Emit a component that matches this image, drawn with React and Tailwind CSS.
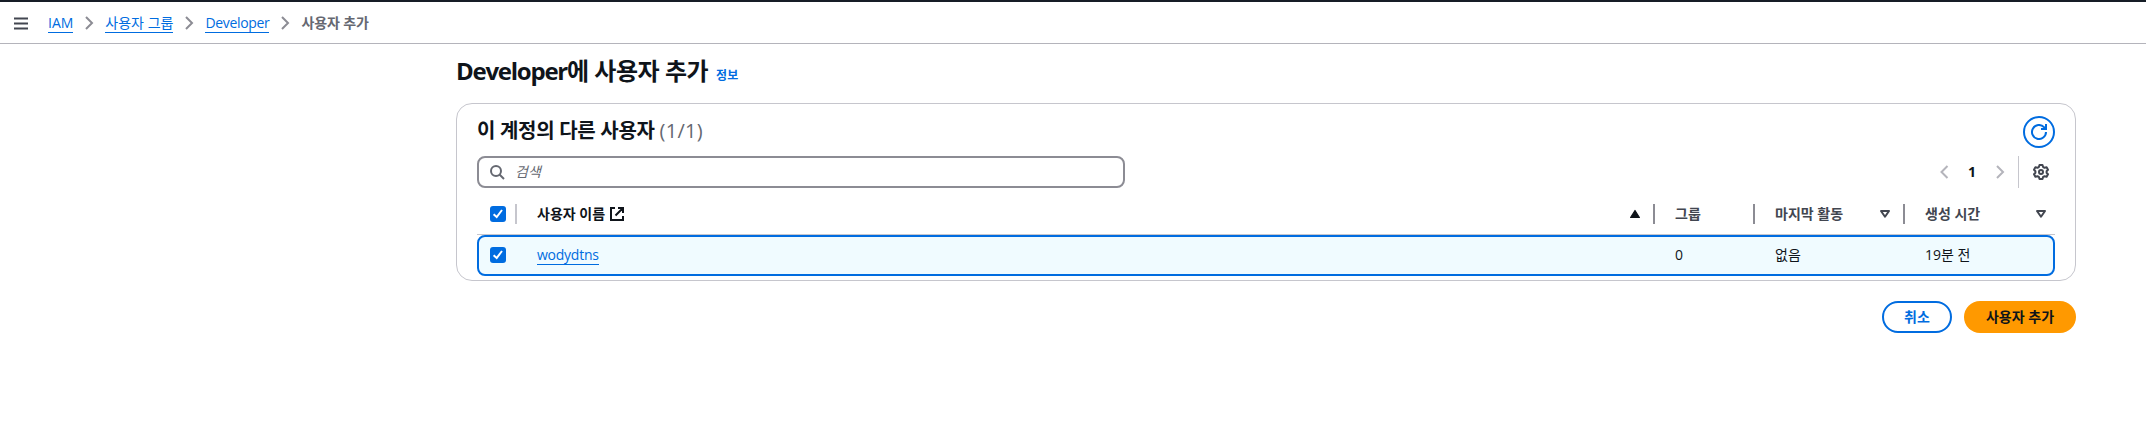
import React from "react";

function Icon({ children, className = "", width = 2 }) {
  return (
    <svg viewBox="0 0 16 16" className={"size-4 shrink-0 " + className} fill="none" stroke="currentColor" strokeWidth={width} aria-hidden="true">
      {children}
    </svg>
  );
}

function Chevron({ left = false, className = "" }) {
  return (
    <Icon className={className}>
      <path d={left ? "M11.500 2l-6 6 6 6" : "M5 2l6 6-6 6"} />
    </Icon>
  );
}

function Checkbox() {
  return (
    <span className="flex size-4 rounded-[3px] bg-[#006ce0] text-white">
      <svg viewBox="0 0 16 16" className="size-4" fill="none" stroke="currentColor" strokeWidth="2">
        <path d="M3.600 8.200 6.700 11 12 4" />
      </svg>
    </span>
  );
}

function SortIcon({ filled = false }) {
  return (
    <Icon className={filled ? "text-[#0f141a]" : "text-[#424650]"}>
      {filled ? (
        <path d="M8 4.500 12.400 11.500H3.600z" fill="currentColor" strokeWidth="1.2" strokeLinejoin="round" />
      ) : (
        <path d="M4 5h8L8 10.800z" strokeLinejoin="round" />
      )}
    </Icon>
  );
}

function Crumb({ children, className = "" }) {
  return (
    <a href="#" className={"flex h-5 items-center border-b border-[#006ce0] pt-px text-[#006ce0] " + className}>
      {children}
    </a>
  );
}

const GRID = "grid grid-cols-[40px_1138px_100px_150px_150px]";

function HeaderCell({ label, sort, divider = true, active = false, external = false }) {
  return (
    <div className={"flex h-5 items-center pl-5 font-bold " + (divider ? "border-r-2 border-[#8c8c94] " : "") + (active ? "text-[#0f141a]" : "text-[#424650]")}>
      <span>{label}</span>
      {external && (
        <Icon className="ml-1 text-[#0f141a]">
          <path d="M9 2h5v5M6.500 9.500 14 2M14 10v4H2V2h4" />
        </Icon>
      )}
      {sort && (
        <span className={"ml-auto " + (divider ? "mr-2.5" : "mr-1.5")}>
          <SortIcon filled={active} />
        </span>
      )}
    </div>
  );
}

export default function App() {
  return (
    <div className="h-[431px] w-[2146px] overflow-hidden bg-white font-['Open_Sans','Noto_Sans_CJK_KR',sans-serif] text-sm leading-5 text-[#0f141a]">
      <div className="h-0.5 bg-[#161d26]" />
      <nav className="flex h-[42px] items-center border-b border-[#b4b4bb] pl-[13px]">
        <Icon className="text-[#424650]">
          <path d="M1 3.500h14M1 8.500h14M1 13.500h14" />
        </Icon>
        <div className="ml-[19px] flex items-center gap-2">
          <Crumb>IAM</Crumb>
          <Chevron className="mt-px text-[#8c8c94]" />
          <Crumb>사용자 그룹</Crumb>
          <Chevron className="mt-px text-[#8c8c94]" />
          <Crumb className="tracking-[-0.33px]">Developer</Crumb>
          <Chevron className="mt-px text-[#8c8c94]" />
          <span className="font-bold tracking-[-0.1px] text-[#656871]">사용자 추가</span>
        </div>
      </nav>

      <main className="ml-[456px] w-[1620px]">
        <div className="flex h-[59px] items-baseline gap-2 pt-3">
          <h1 className="text-2xl leading-[30px] font-bold tracking-[-0.02em]">
            <span className="tracking-[-1.25px]">Developer</span>에 사용자 추가
          </h1>
          <a href="#" className="text-xs font-bold text-[#006ce0]">정보</a>
        </div>

        <section className="h-[178px] rounded-2xl border border-[#c6c6cd] px-5 pt-3">
          <div className="flex h-8 items-center justify-between">
            <h2 className="pb-0.5 text-xl leading-6 font-bold tracking-[-0.015em]">
              이 계정의 다른 사용자 <span className="font-normal tracking-[0.3px] text-[#656871]">(1/1)</span>
            </h2>
            <button className="flex size-8 items-center justify-center rounded-full border-2 border-[#006ce0] text-[#006ce0]">
              <Icon>
                <path d="M15 8A7 7 0 1 1 13 3.100L14.500 5M15 0v5h-5" />
              </Icon>
            </button>
          </div>

          <div className="mt-2 flex h-8 items-center justify-between">
            <div className="flex h-8 w-[648px] items-center gap-2.5 rounded-lg border-2 border-[#8c8c94] pl-2.5 text-[#656871]">
              <Icon>
                <circle cx="7" cy="7" r="5" />
                <path d="m10.500 10.500 4.500 4.500" />
              </Icon>
              <span className="italic">검색</span>
            </div>
            <div className="flex h-8 items-center">
              <Chevron left className="text-[#b4b4bb]" />
              <span className="w-10 text-center font-bold">1</span>
              <Chevron className="text-[#b4b4bb]" />
              <span className="ml-2.5 h-8 w-px bg-[#c6c6cd]" />
              <Icon className="mr-1.5 ml-3.5 text-[#424650]">
                <path d="M6.500 1h3l.6 2 1.500.8 2-.5 1.400 2.500L13.600 7.200v1.600l1.400 1.400-1.400 2.500-2-.5-1.500.8-.6 2h-3l-.6-2-1.500-.8-2 .5L1 10.200l1.400-1.400V7.200L1 5.800l1.400-2.500 2 .5L5.900 3z" strokeLinejoin="round" />
                <circle cx="8" cy="8" r="2" />
              </Icon>
            </div>
          </div>

          <div className={GRID + " mt-[6px] h-[41px] items-center border-b border-[#c6c6cd]"}>
            <div className="flex h-5 items-center border-r-2 border-[#c6c6cd] pl-[13px]">
              <Checkbox />
            </div>
            <HeaderCell label="사용자 이름" sort active external />
            <HeaderCell label="그룹" />
            <HeaderCell label="마지막 활동" sort />
            <HeaderCell label="생성 시간" sort divider={false} />
          </div>

          <div className="h-[41px] rounded-lg border-2 border-[#006ce0] bg-[#f0fbff]">
            <div className={GRID + " -mx-0.5 h-9 items-center"}>
              <div className="pl-[13px]">
                <Checkbox />
              </div>
              <div className="flex pl-5">
                <Crumb className="tracking-[-0.25px]">wodydtns</Crumb>
              </div>
              <div className="pl-5">0</div>
              <div className="pl-5">없음</div>
              <div className="pl-5">19분 전</div>
            </div>
          </div>
        </section>

        <div className="mt-5 flex justify-end gap-3">
          <button className="flex h-8 w-[70px] items-center justify-center rounded-full border-2 border-[#006ce0] font-bold text-[#006ce0]">취소</button>
          <button className="flex h-8 w-[112px] items-center justify-center rounded-full bg-[#ff9900] font-bold">사용자 추가</button>
        </div>
      </main>
    </div>
  );
}
